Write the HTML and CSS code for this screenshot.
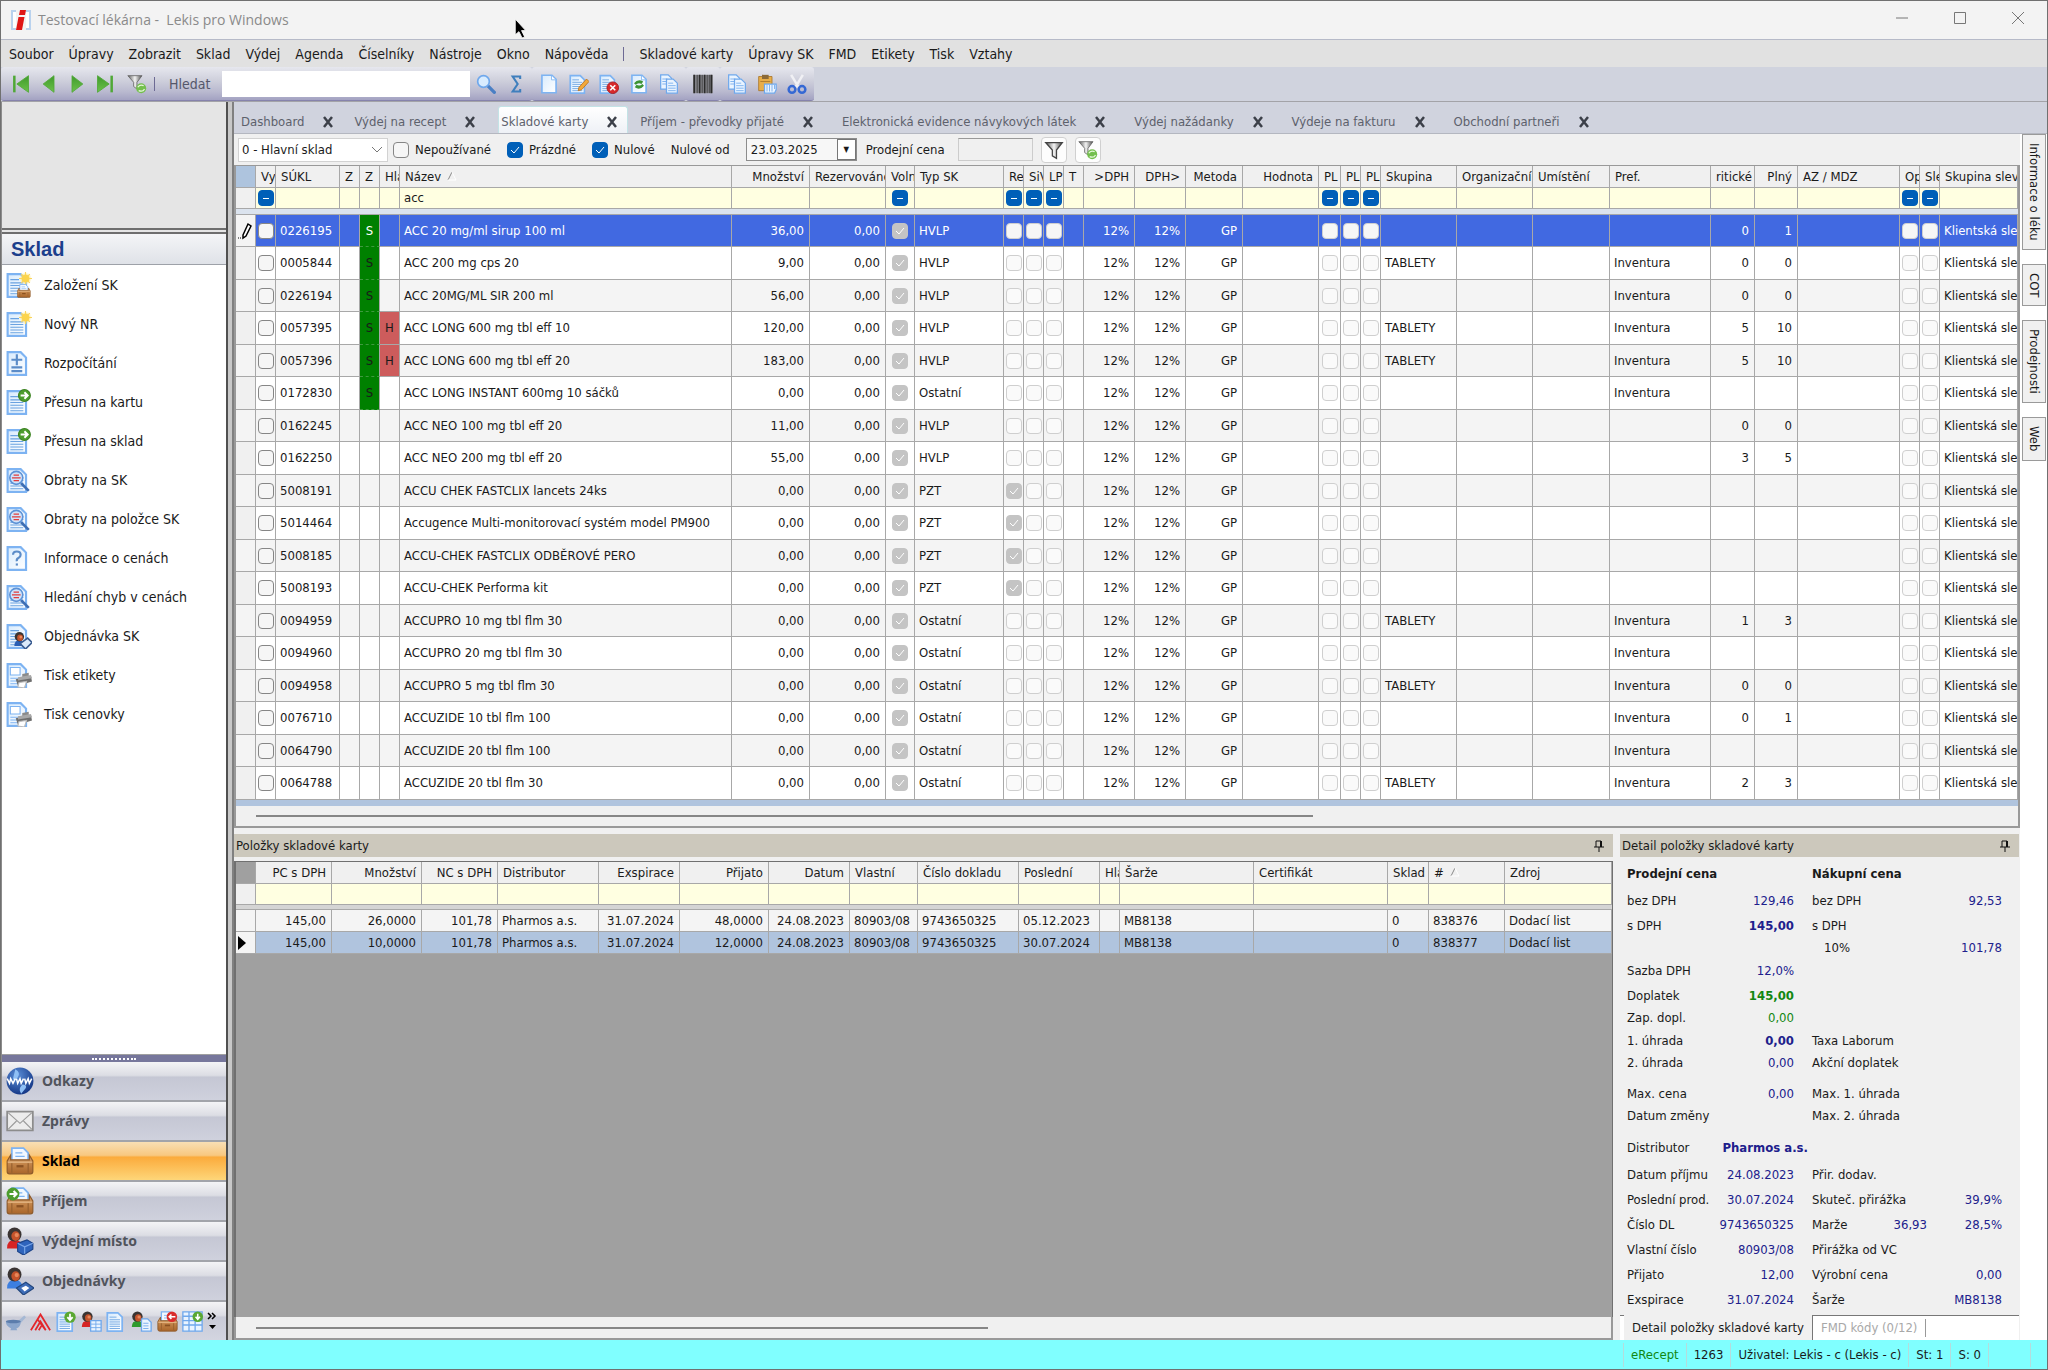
FILE: index.html
```html
<!DOCTYPE html>
<html lang="cs">
<head>
  <meta charset="UTF-8">
  <meta name="viewport" content="width=device-width, initial-scale=1.0">
  <title>Testovací lékárna - Lekis pro Windows</title>
  <link rel="stylesheet" href="styles.css">
</head>
<body>
  <!-- Icon set -->
  <svg class="icon-defs" aria-hidden="true">
    <defs>
      <linearGradient id="gGreen" x1="0" y1="0" x2="0" y2="1"><stop offset="0" stop-color="#3f9a2c"/><stop offset="1" stop-color="#6cc24a"/></linearGradient>
      <linearGradient id="gPaper" x1="0" y1="0" x2="1" y2="1"><stop offset="0" stop-color="#d8ebfd"/><stop offset="1" stop-color="#ffffff"/></linearGradient>
      <linearGradient id="gFunnel" x1="0" y1="0" x2="1" y2="0"><stop offset="0" stop-color="#5a5a5a"/><stop offset=".5" stop-color="#f4f4f4"/><stop offset="1" stop-color="#4a4a4a"/></linearGradient>
      <linearGradient id="gBox" x1="0" y1="0" x2="0" y2="1"><stop offset="0" stop-color="#d9a066"/><stop offset="1" stop-color="#a9652a"/></linearGradient>
      <radialGradient id="gGlobe" cx=".4" cy=".3" r=".8"><stop offset="0" stop-color="#5b8fd8"/><stop offset="1" stop-color="#0c2c7c"/></radialGradient>
      <radialGradient id="gSun"><stop offset=".4" stop-color="#ffd84a"/><stop offset="1" stop-color="#fff3a8" stop-opacity="0"/></radialGradient>
    </defs>

    <symbol id="i-page" viewBox="0 0 24 24"><path d="M3.5 1.5h12l5 5v16h-17z" fill="url(#gPaper)" stroke="#7db3f2" stroke-width="2"/><path d="M15 2v5h5" fill="#fff" stroke="#7db3f2"/></symbol>
    <symbol id="i-doc" viewBox="0 0 24 24"><path d="M1.5 2h12l5 5v16h-17z" fill="url(#gPaper)" stroke="#7db3f2" stroke-width="2"/><path d="M4 7h8M4 10h12M4 12.500h12M4 15h12M4 17.500h12M4 20h12" stroke="#6aa2e0"/></symbol>
    <symbol id="i-sun" viewBox="0 0 24 24"><circle cx="18" cy="6" r="6" fill="url(#gSun)"/><path d="M18 0v12M12 6h12M14 2l8 8M22 2l-8 8" stroke="#fbd45c"/><circle cx="18" cy="6" r="3.500" fill="#fbd44e"/></symbol>
    <symbol id="i-go" viewBox="0 0 24 24"><circle cx="17" cy="6" r="5.500" fill="#4c9c2e" stroke="#3d8323"/><path d="M13.500 6h6M17 3l3 3-3 3" fill="none" stroke="#fff" stroke-width="1.800"/></symbol>
    <symbol id="i-box" viewBox="0 0 24 24"><path d="M5 1h10l4 4v8H5z" fill="#f2f8ff" stroke="#7db3f2" stroke-width="1.500"/><path d="M8 5h6M8 8h8" stroke="#7db3f2"/><path d="M4 7l-3 5v9q0 2 2 2h18q2 0 2-2v-9l-3-5v4H4z" fill="url(#gBox)" stroke="#8d5a2a"/><path d="M1.500 13h21" stroke="#e7bd8b"/><path d="M9 15.500h6v2H9z" fill="#8a5222"/><path d="M5 14v8M19 14v8" stroke="#96602e"/></symbol>
    <symbol id="i-lens" viewBox="0 0 24 24"><path d="M14 15l7 7" stroke="#3e6fb4" stroke-width="2.500"/><circle cx="9.500" cy="10" r="6" fill="#cfe4fb" stroke="#5d92d6" stroke-width="1.500"/><path d="M7 7.500h5M5.500 10h8M7 12.500h5" stroke="#e23b3b" stroke-width="1.200"/></symbol>
    <symbol id="i-printer" viewBox="0 0 24 24"><path d="M15 11l6-1v5h-6z" fill="#8b8b8b"/><path d="M9 16l14-3 1 5-13 4z" fill="#6e6e6e"/><path d="M11 14l12-2 1 3-13 2z" fill="#a8a8a8"/><path d="M12 19l7-1-2 6-6-1z" fill="#fff" stroke="#bbb"/></symbol>
    <symbol id="i-person" viewBox="0 0 24 24"><path d="M1 20q0-8 7-8t8 8z" fill="currentColor"/><circle cx="8" cy="7" r="6.500" fill="#3a3432"/><ellipse cx="9" cy="8.500" rx="4" ry="4.500" fill="#c4532b"/><ellipse cx="10" cy="7.500" rx="2" ry="2" fill="#e8885a"/></symbol>

    <symbol id="i-first" viewBox="0 0 24 24"><path d="M4 2v20" stroke="#4fa836" stroke-width="3"/><path d="M21 2v20L7 12z" fill="url(#gGreen)" stroke="#4fa836"/></symbol>
    <symbol id="i-prev" viewBox="0 0 24 24"><path d="M18 2v20L5 12z" fill="url(#gGreen)" stroke="#4fa836"/></symbol>
    <symbol id="i-next" viewBox="0 0 24 24"><path d="M6 2v20l13-10z" fill="url(#gGreen)" stroke="#4fa836"/></symbol>
    <symbol id="i-last" viewBox="0 0 24 24"><path d="M20 2v20" stroke="#4fa836" stroke-width="3"/><path d="M3 2v20l14-10z" fill="url(#gGreen)" stroke="#4fa836"/></symbol>
    <symbol id="i-funnel" viewBox="0 0 24 24"><path d="M2 3h20l-7 9v10l-5-3v-7z" fill="url(#gFunnel)" stroke="#444" stroke-width="1.500"/></symbol>
    <symbol id="i-refilter" viewBox="0 0 24 24"><path d="M1 2h17l-6 8v8l-4-3v-5z" fill="url(#gFunnel)" stroke="#666"/><circle cx="17" cy="17" r="6" fill="#74bf4e"/><path d="M13 16q2-4 7-2M21 18q-2 4-7 2" fill="none" stroke="#e4f7d8" stroke-width="1.500"/></symbol>
    <symbol id="i-search" viewBox="0 0 24 24"><path d="M14 14l8 8" stroke="#4a7fc4" stroke-width="4" stroke-linecap="round"/><circle cx="9" cy="9" r="7" fill="#d8ecff" stroke="#6fa8ec" stroke-width="2"/></symbol>
    <symbol id="i-sigma" viewBox="0 0 24 24"><path d="M17 6V3H8l6 9-6 9h9v-3" fill="none" stroke="#3f7fbd" stroke-width="2.500"/></symbol>
    <symbol id="i-edit" viewBox="0 0 24 24"><use href="#i-doc"/><path d="M11 20l1-4 9-10 3 3-9 10z" fill="#f2a93b" stroke="#b9701c"/></symbol>
    <symbol id="i-delete" viewBox="0 0 24 24"><use href="#i-doc"/><circle cx="16.500" cy="16.500" r="7" fill="#d7292b" stroke="#a81618"/><path d="M13.500 13.500l6 6M19.500 13.500l-6 6" stroke="#fff" stroke-width="2"/></symbol>
    <symbol id="i-refresh" viewBox="0 0 24 24"><use href="#i-page"/><path d="M6 11q5-6 11-2l-2 3q-4-2-7 1zM18 14q-5 6-11 2l2-3q4 2 7-1z" fill="#3c9434"/></symbol>
    <symbol id="i-copy" viewBox="0 0 24 24"><path d="M2 1h9l4 4v13H2z" fill="#eaf4ff" stroke="#6fa8ec" stroke-width="1.500"/><path d="M4 6h6M4 9h6M4 12h6" stroke="#6fa8ec"/><path d="M9 6h8l5 5v12H9z" fill="#eaf4ff" stroke="#6fa8ec" stroke-width="1.500"/><path d="M11 11h6M11 14h9M11 17h9M11 20h9" stroke="#6fa8ec"/></symbol>
    <symbol id="i-barcode" viewBox="0 0 24 24"><path d="M0 1h24v22H0z" fill="#8a8a90"/><path d="M1.500 1v22M8 1v22M14 1v22M22 1v22" stroke="#2c2c2c" stroke-width="2"/><path d="M5 1v22M11 1v22M17 1v22M19.500 1v22" stroke="#333"/></symbol>
    <symbol id="i-paste" viewBox="0 0 24 24"><path d="M2 3h16v17H2z" fill="#e9ae48" stroke="#a8762a"/><path d="M6 1h8v5H6z" fill="#8c6a38"/><path d="M4 9h12" stroke="#a8762a"/><path d="M9 12h14v7l-2 4H9z" fill="#eaf4ff" stroke="#6fa8ec" stroke-width="1.500"/><path d="M12 13v8M15 13v8M18 13v8M21 13v5" stroke="#6fa8ec"/></symbol>
    <symbol id="i-cut" viewBox="0 0 24 24"><path d="M5 1l9 15M19 1l-9 15" stroke="#f0f0f4" stroke-width="3"/><circle cx="6" cy="18.500" r="4" fill="none" stroke="#3568d4" stroke-width="3"/><circle cx="18" cy="18.500" r="4" fill="none" stroke="#3568d4" stroke-width="3"/></symbol>

    <symbol id="i-newcard" viewBox="0 0 24 24"><use href="#i-doc"/><use href="#i-sun"/><use href="#i-box" x="10" y="11" width="13" height="13"/></symbol>
    <symbol id="i-newnr" viewBox="0 0 24 24"><use href="#i-doc"/><use href="#i-sun"/></symbol>
    <symbol id="i-split" viewBox="0 0 24 24"><path d="M1.500 2h12l5 5v16h-17z" fill="url(#gPaper)" stroke="#7db3f2" stroke-width="2"/><path d="M10 4v10M5 9h10M5 16h10M5 19.500h10" stroke="#5b8cc8" stroke-width="2"/></symbol>
    <symbol id="i-move" viewBox="0 0 24 24"><use href="#i-doc"/><use href="#i-go"/></symbol>
    <symbol id="i-turnover" viewBox="0 0 24 24"><use href="#i-doc"/><use href="#i-lens"/></symbol>
    <symbol id="i-info" viewBox="0 0 24 24"><path d="M1.500 2h12l5 5v16h-17z" fill="url(#gPaper)" stroke="#7db3f2" stroke-width="2"/><path d="M6.500 9q0-3 3.500-3t3.500 3q0 2-2 3t-1.500 3" fill="none" stroke="#5b8cc8" stroke-width="2"/><path d="M9 17h2v2H9z" fill="#5b8cc8"/></symbol>
    <symbol id="i-order" viewBox="0 0 24 24"><use href="#i-doc"/><use href="#i-person" x="7" y="8" width="16" height="16" color="#2b5fb4"/><path d="M13 19l7-5 4 4-6 6z" fill="#dcebfb" stroke="#3a5c90" stroke-width="1.500"/></symbol>
    <symbol id="i-label" viewBox="0 0 24 24"><path d="M1.500 2h12l5 5v16h-17z" fill="url(#gPaper)" stroke="#7db3f2" stroke-width="2"/><path d="M4 5h9v7H4z" fill="#fff" stroke="#7db3f2"/><path d="M4 15h8M4 17.500h8M4 20h8" stroke="#7db3f2"/><use href="#i-printer"/></symbol>

    <symbol id="i-globe" viewBox="0 0 24 24"><circle cx="12" cy="12" r="11.500" fill="url(#gGlobe)"/><path d="M8 2q5 3 2 7t-4 1zM14 15q4 0 3 3l-4 5q-3-4 1-8z" fill="#8fc0f5"/><path d="M1 10l2 4 1-4 2 4 2-4M9 10l1 4 2-4 1 4 2-4M16 10l1 4 2-4 1 4 2-4" fill="none" stroke="#fff" stroke-width="1.300"/></symbol>
    <symbol id="i-mail" viewBox="0 0 24 24"><path d="M1 4h22v16H1z" fill="#ececec" stroke="#8c8c8c" stroke-width="1.500"/><path d="M2 5l10 9L22 5M2 19l7-7M22 19l-7-7" fill="none" stroke="#9a9a9a"/></symbol>
    <symbol id="i-receive" viewBox="0 0 24 24"><use href="#i-box"/><circle cx="6" cy="6" r="5.500" fill="#4c9c2e"/><path d="M3 6h6M6.500 3.500L9 6 6.500 8.500" fill="none" stroke="#fff" stroke-width="1.800"/></symbol>
    <symbol id="i-dispense" viewBox="0 0 24 24"><use href="#i-person" x="0" y="0" width="22" height="22" color="#d62424"/><path d="M10 14l8-3 5 3v5l-8 5-5-3z" fill="#2f64bc" stroke="#1d4488"/><path d="M10 14l6 3 7-3M16 17v6" fill="none" stroke="#7aa6e8"/></symbol>
    <symbol id="i-orders" viewBox="0 0 24 24"><use href="#i-person" x="0" y="0" width="22" height="22" color="#3d7fe0"/><path d="M9 18l8-5 7 5-9 6z" fill="#3d6cb8" stroke="#23477e"/><path d="M13 18l4-2 3 2-4 3z" fill="#fff"/></symbol>

    <symbol id="i-mortar" viewBox="0 0 24 24"><path d="M12 14L22 5l2 2-8 9z" fill="#a4b8d4"/><path d="M1 12h17q0 6-5 8l1 2H6l1-2q-6-3-6-8z" fill="#8ba6cc"/><ellipse cx="9.500" cy="12" rx="8.500" ry="2" fill="#5c7dac"/></symbol>
    <symbol id="i-alfa" viewBox="0 0 24 24"><path d="M1 22L12 4l11 18M6 22l6-10 6 10M10 22l3-5M9 10l9 12" fill="none" stroke="#e3262b" stroke-width="2"/></symbol>
    <symbol id="i-docdown" viewBox="0 0 24 24"><use href="#i-doc"/><circle cx="16" cy="7" r="6.500" fill="#5aa832"/><path d="M16 3v7M13 7l3 3.500L19 7" fill="none" stroke="#fff" stroke-width="2"/></symbol>
    <symbol id="i-pergrid" viewBox="0 0 24 24"><use href="#i-person" x="0" y="0" width="22" height="22" color="#d62424"/><path d="M11 11h12v12H11z" fill="#eaf4ff" stroke="#6fa8ec" stroke-width="1.500"/><path d="M11 15h12M11 19h12M17 11v12" stroke="#6fa8ec"/></symbol>
    <symbol id="i-perdoc" viewBox="0 0 24 24"><use href="#i-person" x="0" y="0" width="22" height="22" color="#2d9a2d"/><path d="M12 9h7l4 4v10H12z" fill="#eaf4ff" stroke="#6fa8ec" stroke-width="1.500"/><path d="M14 14h6M14 17h6M14 20h6" stroke="#6fa8ec"/></symbol>
    <symbol id="i-boxout" viewBox="0 0 24 24"><use href="#i-box"/><circle cx="17" cy="6.500" r="6" fill="#d92c2c"/><path d="M21 6.500h-7M16.500 4L14 6.500 16.500 9" fill="none" stroke="#fff" stroke-width="1.800"/></symbol>
    <symbol id="i-griddown" viewBox="0 0 24 24"><path d="M1 1h22v22H1z" fill="#eaf4ff" stroke="#6fa8ec" stroke-width="1.500"/><path d="M1 6h22M1 11h22M1 16h22M8 1v22M15 1v22" stroke="#6fa8ec" stroke-width="1.500"/><circle cx="18" cy="6.500" r="6" fill="#5aa832"/><path d="M18 3v6M15.500 6.500L18 9.500l2.500-3" fill="none" stroke="#fff" stroke-width="1.800"/></symbol>
    <symbol id="i-pin" viewBox="0 0 12 12"><path d="M3 7V1h5v6M1 7h10M6 7v5" fill="none" stroke="#111"/><path d="M7 1h2v6H7z" fill="#111"/></symbol>
    <symbol id="i-sort" viewBox="0 0 10 10"><path d="M1 9L5 1" stroke="#888"/><path d="M5 1l4 8H1" fill="none" stroke="#fff"/></symbol>
    <symbol id="i-close" viewBox="0 0 12 12"><path d="M2 1l8 10M10 1L2 11" stroke="#3c4049" stroke-width="2.500"/></symbol>
  </svg>

  <div class="window">
    <header class="titlebar">
      <svg class="app-logo" viewBox="0 0 20 20"><path d="M5 1H1v18h4M15 1h4v18h-4" fill="#fff" stroke="#b9d2ee" stroke-width="2"/><path d="M9 0h6l-1 5H8zM7.500 7h6L11 20H5z" fill="#e01717"/></svg>
      <span class="titlebar-text">Testovací lékárna -&nbsp; Lekis pro Windows</span>
      <div class="window-buttons">
        <button type="button" aria-label="Minimalizovat"><svg viewBox="0 0 12 12"><path d="M0 6h12" stroke="#777"/></svg></button>
        <button type="button" aria-label="Maximalizovat"><svg viewBox="0 0 12 12"><path d="M.5.5h11v11H.5z" fill="none" stroke="#777"/></svg></button>
        <button type="button" aria-label="Zavřít"><svg viewBox="0 0 12 12"><path d="M0 0l12 12M12 0L0 12" stroke="#777"/></svg></button>
      </div>
      <svg class="cursor" viewBox="0 0 12 20"><path d="M1 1v15l3.500-3 3 6 2.500-1-3-6H11z" fill="#000" stroke="#fff" stroke-width=".8"/></svg>
    </header>

    <nav class="menubar">
      <a href="#">Soubor</a>
      <a href="#">Úpravy</a>
      <a href="#">Zobrazit</a>
      <a href="#">Sklad</a>
      <a href="#">Výdej</a>
      <a href="#">Agenda</a>
      <a href="#">Číselníky</a>
      <a href="#">Nástroje</a>
      <a href="#">Okno</a>
      <a href="#">Nápověda</a>
      <span class="separator"></span>
      <a href="#">Skladové karty</a>
      <a href="#">Úpravy SK</a>
      <a href="#">FMD</a>
      <a href="#">Etikety</a>
      <a href="#">Tisk</a>
      <a href="#">Vztahy</a>
    </nav>

    <div class="toolbar">
      <div class="strip strip-nav">
        <button type="button" aria-label="První"><svg><use href="#i-first"/></svg></button>
        <button type="button" aria-label="Předchozí"><svg><use href="#i-prev"/></svg></button>
        <button type="button" aria-label="Další"><svg><use href="#i-next"/></svg></button>
        <button type="button" aria-label="Poslední"><svg><use href="#i-last"/></svg></button>
        <button type="button" class="wide" aria-label="Obnovit filtr"><svg><use href="#i-refilter"/></svg></button>
        <span class="separator"></span>
        <label for="search">Hledat</label>
        <input type="text" id="search">
        <button type="button" class="wide" aria-label="Najít"><svg><use href="#i-search"/></svg></button>
        <button type="button" aria-label="Součet"><svg><use href="#i-sigma"/></svg></button>
      </div>
      <div class="strip">
        <button type="button" aria-label="Nový"><svg><use href="#i-page"/></svg></button>
        <button type="button" aria-label="Upravit"><svg><use href="#i-edit"/></svg></button>
        <button type="button" aria-label="Smazat"><svg><use href="#i-delete"/></svg></button>
        <button type="button" aria-label="Obnovit"><svg><use href="#i-refresh"/></svg></button>
        <button type="button" aria-label="Kopie karty"><svg><use href="#i-copy"/></svg></button>
      </div>
      <div class="strip">
        <button type="button" aria-label="Čárový kód"><svg><use href="#i-barcode"/></svg></button>
      </div>
      <div class="strip">
        <button type="button" aria-label="Kopírovat"><svg><use href="#i-copy"/></svg></button>
        <button type="button" aria-label="Vložit"><svg><use href="#i-paste"/></svg></button>
        <button type="button" aria-label="Vyjmout"><svg><use href="#i-cut"/></svg></button>
      </div>
    </div>

    <div class="workspace">
      <aside class="sidebar">
        <div class="sidebar-top"></div>
        <h2 class="sidebar-title">Sklad</h2>
        <ul class="task-list">
          <li><a href="#"><svg><use href="#i-newcard"/></svg>Založení SK</a></li>
          <li><a href="#"><svg><use href="#i-newnr"/></svg>Nový NR</a></li>
          <li><a href="#"><svg><use href="#i-split"/></svg>Rozpočítání</a></li>
          <li><a href="#"><svg><use href="#i-move"/></svg>Přesun na kartu</a></li>
          <li><a href="#"><svg><use href="#i-move"/></svg>Přesun na sklad</a></li>
          <li><a href="#"><svg><use href="#i-turnover"/></svg>Obraty na SK</a></li>
          <li><a href="#"><svg><use href="#i-turnover"/></svg>Obraty na položce SK</a></li>
          <li><a href="#"><svg><use href="#i-info"/></svg>Informace o cenách</a></li>
          <li><a href="#"><svg><use href="#i-turnover"/></svg>Hledání chyb v cenách</a></li>
          <li><a href="#"><svg><use href="#i-order"/></svg>Objednávka SK</a></li>
          <li><a href="#"><svg><use href="#i-label"/></svg>Tisk etikety</a></li>
          <li><a href="#"><svg><use href="#i-label"/></svg>Tisk cenovky</a></li>
        </ul>
        <div class="grip"><span></span></div>
        <div class="nav-groups">
          <button type="button"><svg><use href="#i-globe"/></svg>Odkazy</button>
          <button type="button"><svg><use href="#i-mail"/></svg>Zprávy</button>
          <button type="button" class="active"><svg><use href="#i-box"/></svg>Sklad</button>
          <button type="button"><svg><use href="#i-receive"/></svg>Příjem</button>
          <button type="button"><svg><use href="#i-dispense"/></svg>Výdejní místo</button>
          <button type="button"><svg><use href="#i-orders"/></svg>Objednávky</button>
        </div>
        <div class="nav-overflow">
          <svg><use href="#i-mortar"/></svg>
          <svg><use href="#i-alfa"/></svg>
          <svg><use href="#i-docdown"/></svg>
          <svg><use href="#i-pergrid"/></svg>
          <svg><use href="#i-doc"/></svg>
          <svg><use href="#i-perdoc"/></svg>
          <svg><use href="#i-boxout"/></svg>
          <svg><use href="#i-griddown"/></svg>
          <button type="button" aria-label="Další skupiny"><svg viewBox="0 0 10 18"><path d="M1 1l3 3-3 3M5 1l3 3-3 3" fill="none" stroke="#000" stroke-width="1.500"/><path d="M2 13h7l-3.500 4z"/></svg></button>
        </div>
      </aside>
      <div class="splitter"></div>

      <main class="main">
        <div class="tabs">
          <div class="tab">Dashboard <button type="button" aria-label="Zavřít Dashboard"><svg><use href="#i-close"/></svg></button></div>
          <div class="tab">Výdej na recept <button type="button" aria-label="Zavřít Výdej na recept"><svg><use href="#i-close"/></svg></button></div>
          <div class="tab active">Skladové karty <button type="button" aria-label="Zavřít Skladové karty"><svg><use href="#i-close"/></svg></button></div>
          <div class="tab">Příjem - převodky přijaté <button type="button" aria-label="Zavřít Příjem"><svg><use href="#i-close"/></svg></button></div>
          <div class="tab">Elektronická evidence návykových látek <button type="button" aria-label="Zavřít evidenci"><svg><use href="#i-close"/></svg></button></div>
          <div class="tab">Výdej nažádanky <button type="button" aria-label="Zavřít Výdej na žádanky"><svg><use href="#i-close"/></svg></button></div>
          <div class="tab">Výdeje na fakturu <button type="button" aria-label="Zavřít Výdeje na fakturu"><svg><use href="#i-close"/></svg></button></div>
          <div class="tab">Obchodní partneři <button type="button" aria-label="Zavřít Obchodní partneři"><svg><use href="#i-close"/></svg></button></div>
        </div>

        <div class="main-body">
          <div class="content">
            <form class="filterbar">
              <select aria-label="Sklad"><option>0 - Hlavní sklad</option></select>
              <label><input type="checkbox" class="check"> Nepoužívané</label>
              <label><input type="checkbox" class="check" checked> Prázdné</label>
              <label><input type="checkbox" class="check" checked> Nulové</label>
              <label for="zero-from">Nulové od</label>
              <div class="datebox"><input type="text" id="zero-from" value="23.03.2025"><button type="button" aria-label="Kalendář">▼</button></div>
              <label for="price">Prodejní cena</label>
              <input type="text" id="price" class="price">
              <button type="button" class="tool" aria-label="Filtrovat"><svg><use href="#i-funnel"/></svg></button>
              <button type="button" class="tool" aria-label="Zrušit filtr"><svg><use href="#i-refilter"/></svg></button>
            </form>

            <section class="grid-panel">
              <table class="grid cards" id="cards"></table>
              <div class="grid-end"></div>
              <div class="scrollbar"><span class="thumb thumb-cards"></span></div>
            </section>

            <div class="bottom">
              <section class="items">
                <h3 class="panel-title">Položky skladové karty <svg><use href="#i-pin"/></svg></h3>
                <div class="items-body">
                  <table class="grid lots" id="lots"></table>
                </div>
                <div class="scrollbar"><span class="thumb thumb-lots"></span></div>
              </section>

              <section class="detail">
                <h3 class="panel-title">Detail položky skladové karty <svg><use href="#i-pin"/></svg></h3>
                <div class="detail-body">
                  <div class="row head"><span>Prodejní cena</span><span>Nákupní cena</span></div>
                  <div class="row"><span>bez DPH <b>129,46</b></span><span>bez DPH <b>92,53</b></span></div>
                  <div class="row"><span>s DPH <b class="strong">145,00</b></span><span>s DPH</span></div>
                  <div class="row low"><span></span><span class="indent">10% <b>101,78</b></span></div>
                  <div class="row"><span>Sazba DPH <b>12,0%</b></span><span></span></div>
                  <div class="row"><span>Doplatek <b class="strong green">145,00</b></span><span></span></div>
                  <div class="row low"><span>Zap. dopl. <b class="green">0,00</b></span><span></span></div>
                  <div class="row"><span>1. úhrada <b class="strong">0,00</b></span><span>Taxa Laborum</span></div>
                  <div class="row low"><span>2. úhrada <b>0,00</b></span><span>Akční doplatek</span></div>
                  <div class="row spaced"><span>Max. cena <b>0,00</b></span><span>Max. 1. úhrada</span></div>
                  <div class="row low"><span>Datum změny</span><span>Max. 2. úhrada</span></div>
                  <div class="row spaced tall"><span class="supplier">Distributor <b class="strong">Pharmos a.s.</b></span><span></span></div>
                  <div class="row"><span>Datum příjmu <b>24.08.2023</b></span><span>Přir. dodav.</span></div>
                  <div class="row"><span>Poslední prod. <b>30.07.2024</b></span><span>Skuteč. přirážka <b>39,9%</b></span></div>
                  <div class="row"><span>Číslo DL <b>9743650325</b></span><span>Marže <b>36,93</b> <b class="second">28,5%</b></span></div>
                  <div class="row"><span>Vlastní číslo <b>80903/08</b></span><span>Přirážka od VC</span></div>
                  <div class="row"><span>Přijato <b>12,00</b></span><span>Výrobní cena <b>0,00</b></span></div>
                  <div class="row"><span>Exspirace <b>31.07.2024</b></span><span>Šarže <b>MB8138</b></span></div>
                </div>
                <div class="detail-tabs">
                  <button type="button" class="active">Detail položky skladové karty</button>
                  <button type="button">FMD kódy (0/12)</button>
                  <span class="tab-end"></span>
                </div>
              </section>
            </div>
          </div>

          <nav class="dock">
            <button type="button">Informace o léku</button>
            <button type="button">COT</button>
            <button type="button">Prodejnosti</button>
            <button type="button">Web</button>
          </nav>
        </div>
      </main>
    </div>

    <footer class="statusbar">
      <span class="online">eRecept</span>
      <span>1263</span>
      <span>Uživatel: Lekis - c (Lekis - c)</span>
      <span>St: 1</span>
      <span>S: 0</span>
      <span class="empty"></span>
      <span class="empty"></span>
    </footer>
  </div>

  <script src="script.js"></script>
</body>
</html>
```

FILE: styles.css
```css
* {
  box-sizing: border-box;
}

body {
  margin: 0;
  font-family: "DejaVu Sans Condensed", "DejaVu Sans", Tahoma, sans-serif;
  font-size: 13px;
  line-height: 16px;
  color: #1a1a1a;
}

a {
  color: inherit;
  text-decoration: none;
}

button,
input,
select {
  font: inherit;
  color: inherit;
}

button {
  padding: 0;
  border: none;
  background: none;
}

.icon-defs {
  position: absolute;
  width: 0;
  height: 0;
}

.window {
  display: flex;
  flex-direction: column;
  min-height: 100vh;
  border: 1px solid #707070;
  background-color: #f0f0f0;
}

/* Title bar */
.titlebar {
  position: relative;
  display: flex;
  align-items: center;
  height: 39px;
  padding-left: 10px;
  background-color: #f3f3f3;
  border-bottom: 1px solid #b6bac8;
}

.app-logo {
  width: 20px;
  height: 20px;
  margin-right: 7px;
}

.titlebar-text {
  font-family: "Open Sans", sans-serif;
  font-size: 14px;
  color: #8a8a8a;
}

.window-buttons {
  display: flex;
  margin-left: auto;
}

.window-buttons button {
  width: 58px;
  height: 38px;
}

.window-buttons svg {
  width: 12px;
  height: 12px;
}

.cursor {
  position: absolute;
  left: 513px;
  top: 17px;
  width: 13px;
  height: 21px;
}

/* Menu and toolbar */
.menubar {
  display: flex;
  align-items: center;
  gap: 15px;
  height: 27px;
  padding-left: 8px;
  font-size: 14px;
  background-color: #e1e1e1;
}

.separator {
  width: 1px;
  height: 14px;
  background-color: #6d6a94;
}

.toolbar {
  display: flex;
  height: 35px;
  background-color: #d0d3de;
  border-bottom: 1px solid #a3a3a8;
}

.strip {
  display: flex;
  align-items: center;
  height: 34px;
  padding: 0 2px;
  border-radius: 3px;
  border-bottom: 1px solid #8683ac;
  background: linear-gradient(#e6e7ee, #cfd0dc 40%, #b9b9cf 75%, #a3a2c2);
}

.strip button {
  width: 30px;
  height: 30px;
}

.strip svg {
  display: block;
  width: 20px;
  height: 20px;
  margin: 0 auto;
}

.strip-nav {
  padding-left: 6px;
}

.strip-nav button {
  width: 28px;
}

.strip-nav .wide {
  width: 35px;
}

.strip-nav label {
  margin: 0 12px 0 14px;
  font-size: 14px;
  color: #55576a;
}

.strip-nav input {
  width: 248px;
  height: 26px;
  padding: 0 4px;
  border: none;
  background-color: #fff;
}

.strip-nav input + .wide {
  width: 32px;
}

/* Workspace */
.workspace {
  display: flex;
  flex: 1;
}

.sidebar {
  display: flex;
  flex-direction: column;
  width: 225px;
  border-left: 1px solid #8c8c8c;
  background-color: #fff;
}

.splitter {
  width: 8px;
  background-color: #c8c8c8;
  border-left: 2px solid #505050;
  border-right: 2px solid #808080;
}

.sidebar-top {
  height: 132px;
  background-color: #e5e5e5;
  border-bottom: 6px double #6e6e6e;
}

.sidebar-title {
  height: 31px;
  margin: 0;
  padding-left: 9px;
  font-family: "Liberation Sans", Arial, sans-serif;
  font-size: 20px;
  line-height: 31px;
  color: #1c3f8c;
  background: linear-gradient(#f4f5f7, #dfe2e8);
  border-bottom: 1px solid #9da1a8;
}

.task-list {
  flex: 1;
  margin: 0;
  padding: 0;
  font-size: 14px;
  list-style: none;
}

.task-list a {
  display: flex;
  align-items: center;
  gap: 12px;
  height: 39px;
  padding-left: 4px;
}

.task-list svg {
  width: 26px;
  height: 26px;
}

.grip {
  display: flex;
  justify-content: center;
  align-items: center;
  height: 8px;
  background-color: #77779c;
  border-top: 1px solid #a0a0a0;
}

.grip span {
  width: 44px;
  border-top: 2px dotted #fff;
}

.nav-groups button {
  display: flex;
  align-items: center;
  gap: 8px;
  width: 100%;
  height: 40px;
  padding-left: 4px;
  font-family: "Noto Sans", sans-serif;
  font-size: 14px;
  font-weight: bold;
  color: #51545c;
  background: linear-gradient(#f4f4f6, #dcdde4 35%, #c5c7d4 40%, #cfd1dd);
  border-bottom: 2px solid #a2a4aa;
}

.nav-groups .active {
  color: #000;
  background: linear-gradient(#f9dfb4, #f8c880 35%, #fbab3c 40%, #fed679);
}

.nav-groups svg {
  width: 28px;
  height: 28px;
}

.nav-overflow {
  display: flex;
  align-items: center;
  justify-content: space-between;
  height: 38px;
  padding: 0 9px 0 3px;
  background: linear-gradient(#f4f4f6, #dcdde4 35%, #c9cbd7 40%, #d3d5e0);
}

.nav-overflow svg {
  width: 21px;
  height: 21px;
}

.nav-overflow button svg {
  display: block;
  width: 10px;
  height: 18px;
}

.main {
  display: flex;
  flex: 1;
  flex-direction: column;
  min-width: 0;
}

/* Document tabs */
.tabs {
  display: flex;
  align-items: flex-end;
  height: 32px;
  background-color: #d0d3de;
  border-bottom: 1px solid #b4b7c0;
}

.tab {
  display: flex;
  align-items: center;
  gap: 18px;
  height: 27px;
  padding: 4px 13px 0 15px;
  color: #5d616c;
}

.tab:first-child {
  padding-right: 5px;
  padding-left: 7px;
}

.tab svg {
  display: block;
  width: 12px;
  height: 12px;
}

.tab.active {
  margin-left: 9px;
  padding: 3px 9px 0 2px;
  background: linear-gradient(#ffffff, #eef1f6);
  border: 1px solid #c3e3e6;
  border-bottom: none;
  border-radius: 3px 3px 0 0;
}

.tab.active + .tab {
  padding-left: 12px;
}

.main-body {
  display: flex;
  flex: 1;
}

.content {
  display: flex;
  flex: 1;
  flex-direction: column;
  min-width: 0;
}

/* Filter bar */
.filterbar {
  display: flex;
  align-items: center;
  height: 31px;
  padding-left: 4px;
}

.filterbar label {
  display: flex;
  align-items: center;
  gap: 6px;
  margin-right: 16px;
}

.filterbar select {
  width: 150px;
  height: 24px;
  margin-right: 5px;
  padding: 0 3px;
  appearance: none;
  background: #fff url("data:image/svg+xml,%3Csvg xmlns='http://www.w3.org/2000/svg' width='10' height='6'%3E%3Cpath d='M0 0l5 5 5-5' fill='none' stroke='%23777'/%3E%3C/svg%3E") right 5px center no-repeat;
  border: 1px solid #d2d2d2;
}

.check {
  flex: none;
  width: 16px;
  height: 16px;
  margin: 0;
  appearance: none;
  vertical-align: middle;
  background: #f6f6f6 center no-repeat;
  border: 1px solid #868686;
  border-radius: 4px;
}

.check:checked {
  background-color: #005fb8;
  background-image: url("data:image/svg+xml,%3Csvg xmlns='http://www.w3.org/2000/svg' width='10' height='10'%3E%3Cpath d='M1 5l3 3 5-6' fill='none' stroke='%23fff'/%3E%3C/svg%3E");
  border-color: #005fb8;
}

.check:disabled {
  background-color: #fafafa;
  border-color: #cfcfcf;
}

.check:disabled:checked {
  background-color: #c4c4c4;
  border-color: #c4c4c4;
}

.check.mixed {
  background-color: #005fb8;
  background-image: linear-gradient(#fff, #fff);
  background-size: 6px 1px;
  border-color: #005fb8;
}

.datebox {
  display: flex;
  width: 111px;
  height: 23px;
  margin-right: 9px;
  border: 1px solid #8c8c8c;
  background-color: #f7f7f7;
}

.datebox input {
  flex: 1;
  min-width: 0;
  padding: 0 4px;
  border: none;
  background: none;
}

.datebox button {
  width: 19px;
  font-size: 8px;
  background-color: #fff;
  border: 1px solid #777;
}

.filterbar label[for="price"] {
  margin-right: 13px;
}

.price {
  width: 75px;
  height: 23px;
  margin-right: 8px;
  background-color: #f0f0f0;
  border: 1px solid #ccc;
  border-top-color: #999;
}

.tool {
  width: 26px;
  height: 26px;
  margin-right: 8px;
  background-color: #fdfdfd;
  border: 1px solid #d0d0d0;
  border-radius: 4px;
}

.tool svg {
  display: block;
  width: 20px;
  height: 20px;
  margin: 0 auto;
}

/* Data grids */
.grid-panel {
  border: 2px solid #999;
  border-width: 1px 2px 2px;
}

.grid {
  width: 100%;
  table-layout: fixed;
  border-collapse: separate;
  border-spacing: 0;
}

.grid th,
.grid td {
  padding: 0 4px;
  overflow: hidden;
  text-align: left;
  white-space: nowrap;
  border-right: 1px solid #a8a8a8;
  border-bottom: 1px solid #a8a8a8;
}

.grid thead th {
  height: 22px;
  padding: 0 5px;
  font-weight: normal;
  background-color: #f0f0f0;
}

.grid .filter td {
  height: 21px;
  background-color: #ffffe1;
}

.grid .gap td {
  height: 5px;
  border-right: none;
  background-color: #dbe3ee;
}

.cards .gap td {
  height: 6px;
}

.grid .num {
  padding-right: 5px;
  text-align: right;
}

.grid td.box {
  padding: 0;
  text-align: center;
}

.grid th.box {
  padding-right: 0;
}

.grid .mark,
.grid .filter .mark {
  padding: 0 2px;
  background-color: #f0f0f0;
}

.grid svg {
  width: 10px;
  height: 10px;
  margin-left: 2px;
}

.cards thead .mark {
  background-color: #aec4de;
}

.cards tbody .data td {
  height: 33px;
  background-color: #fff;
}

.cards tbody .data:nth-child(odd) td {
  height: 32px;
}

.cards tbody .data:nth-child(odd) td:not(.in-stock):not(.hlp) {
  background-color: #f4f4f4;
}

.cards tbody .data.selected td:not(.mark):not(.in-stock) {
  color: #fff;
  background-color: #4169e1;
}

.cards .selected .check {
  background-color: #f6f6f6;
}

.cards .selected .check:disabled:checked {
  background-color: #c4c4c4;
}

.cards tbody .data .mark {
  background-color: #f0f0f0;
}

.cards tbody .data .in-stock {
  background-color: #008000;
  border-bottom: 1px dashed #3f9a3f;
}

.cards .selected .in-stock {
  color: #fff;
}

.cards tbody .data .hlp {
  background-color: #cd5c5c;
}

.grid .in-stock,
.grid .hlp {
  padding: 0;
  text-align: center;
}

.cards .mark svg {
  width: 14px;
  height: 18px;
  margin: 0;
  vertical-align: middle;
}

.grid-end {
  height: 6px;
  background-color: #b0c4de;
}

.scrollbar {
  display: flex;
  align-items: center;
  height: 20px;
  padding-left: 20px;
  background-color: #f0f0f0;
}

.thumb {
  height: 2px;
  background-color: #868686;
}

.thumb-cards {
  width: 60%;
}

.thumb-lots {
  width: 54%;
}

/* Bottom panels */
.bottom {
  display: flex;
  flex: 1;
  gap: 7px;
  margin: 6px 1px 0 0;
}

.items {
  display: flex;
  flex: 1;
  flex-direction: column;
  min-width: 0;
}

.panel-title {
  display: flex;
  align-items: center;
  justify-content: space-between;
  height: 23px;
  margin: 0;
  padding: 0 8px 0 2px;
  font-size: 13px;
  font-weight: normal;
  background-color: #ccc8bc;
}

.panel-title svg {
  width: 12px;
  height: 12px;
}

.items-body {
  flex: 1;
  margin-top: 4px;
  background-color: #a0a0a0;
  border: 1px solid #707070;
  border-width: 1px 1px 0 2px;
}

.lots thead .mark {
  background-color: #a0a0a0;
}

.lots .gap td {
  background-color: #d4d4d4;
}

.lots .data td {
  height: 22px;
  background-color: #f4f4f4;
}

.lots .data.selected td:not(.mark) {
  background-color: #b0c4de;
}

.lots .mark svg {
  display: block;
  width: 8px;
  height: 14px;
  margin: 0;
}

.items .scrollbar {
  height: 23px;
  border: 2px solid #999;
  border-top: none;
}

.detail {
  display: flex;
  flex-direction: column;
  width: 399px;
}

.detail-body {
  flex: 1;
  padding: 3px 17px 0 7px;
}

.row {
  display: grid;
  grid-template-columns: 167fr 190fr;
  column-gap: 18px;
  align-items: center;
  height: 25px;
}

.row > span {
  display: flex;
}

.row b {
  margin-left: auto;
  font-weight: normal;
  color: #20208c;
}

.row .strong {
  font-weight: bold;
}

.row .green {
  color: #128712;
}

.row .second {
  width: 75px;
  margin-left: 0;
  text-align: right;
}

.row .supplier {
  margin-right: -14px;
}

.detail-body .head {
  height: 28px;
  font-weight: bold;
}

.low {
  height: 20px;
}

.spaced {
  margin-top: 8px;
}

.tall {
  height: 28px;
}

.indent {
  padding-left: 12px;
}

.detail-tabs {
  display: flex;
  align-items: center;
  height: 25px;
  background-color: #fff;
  border-top: 1px solid #777;
}

.detail-tabs button {
  height: 24px;
  padding: 0 8px;
  color: #a8a8a8;
}

.detail-tabs .active {
  height: 25px;
  margin: -1px 0 0 4px;
  color: #1a1a1a;
  background-color: #f0f0f0;
  border-right: 1px solid #777;
}

.tab-end {
  width: 1px;
  height: 18px;
  background-color: #999;
}

/* Right dock */
.dock {
  display: flex;
  flex-direction: column;
  gap: 14px;
  width: 27px;
  padding-left: 2px;
  background-color: #fff;
}

.dock button {
  width: 24px;
  padding: 8px 0;
  writing-mode: vertical-rl;
  background-color: #f0f0f0;
  border: 1px solid #9a9a9a;
}

/* Status bar */
.statusbar {
  display: flex;
  align-items: center;
  justify-content: flex-end;
  height: 29px;
  background-color: #80ffff;
}

.statusbar span {
  padding: 0 7px;
  line-height: 24px;
  border-left: 1px solid #b4dcdc;
}

.statusbar .online {
  color: #128712;
}

.statusbar .empty {
  width: 42px;
  height: 24px;
}

.statusbar .empty:last-child {
  width: 17px;
}
```

FILE: script.js
```js
// Column definitions: [title, width, kind]
const cardColumns = [
  ['', 20, 'mark'], ['Vy', 20, 'box'], ['SÚKL', 64, ''], ['Z', 20, ''], ['Z', 20, ''], ['Hlá', 20, ''],
  ['Název', 332, 'sort'], ['Množství', 78, 'num'], ['Rezervováno', 76, ''], ['Volně', 29, 'box'], ['Typ SK', 89, ''],
  ['Rec', 20, 'box'], ['SiV', 20, 'box'], ['LP', 20, 'box'], ['T', 20, ''], ['>DPH', 51, 'num'], ['DPH>', 51, 'num'],
  ['Metoda', 57, 'num'], ['Hodnota', 76, 'num'], ['PL', 22, 'box'], ['PL', 20, 'box'], ['PL', 20, 'box'],
  ['Skupina', 76, ''], ['Organizační', 76, ''], ['Umístění', 77, ''], ['Pref.', 101, ''], ['ritické', 44, 'num'],
  ['Plný', 43, 'num'], ['AZ / MDZ', 102, ''], ['Op', 20, 'box'], ['Sle', 20, 'box'], ['Skupina slev', 0, '']
];

// sukl, stock flag, H flag, name, quantity, type, group, pref, critical, full
const cards = [
  ['0226195', 'S', '', 'ACC 20 mg/ml sirup 100 ml', '36,00', 'HVLP', '', '', '0', '1'],
  ['0005844', 'S', '', 'ACC 200 mg cps 20', '9,00', 'HVLP', 'TABLETY', 'Inventura', '0', '0'],
  ['0226194', 'S', '', 'ACC 20MG/ML SIR 200 ml', '56,00', 'HVLP', '', 'Inventura', '0', '0'],
  ['0057395', 'S', 'H', 'ACC LONG 600 mg tbl eff 10', '120,00', 'HVLP', 'TABLETY', 'Inventura', '5', '10'],
  ['0057396', 'S', 'H', 'ACC LONG 600 mg tbl eff 20', '183,00', 'HVLP', 'TABLETY', 'Inventura', '5', '10'],
  ['0172830', 'S', '', 'ACC LONG INSTANT 600mg 10 sáčků', '0,00', 'Ostatní', '', 'Inventura', '', ''],
  ['0162245', '', '', 'ACC NEO 100 mg tbl eff 20', '11,00', 'HVLP', '', '', '0', '0'],
  ['0162250', '', '', 'ACC NEO 200 mg tbl eff 20', '55,00', 'HVLP', '', '', '3', '5'],
  ['5008191', '', '', 'ACCU CHEK FASTCLIX lancets 24ks', '0,00', 'PZT', '', '', '', ''],
  ['5014464', '', '', 'Accugence Multi-monitorovací systém model PM900', '0,00', 'PZT', '', '', '', ''],
  ['5008185', '', '', 'ACCU-CHEK FASTCLIX ODBĚROVÉ PERO', '0,00', 'PZT', '', '', '', ''],
  ['5008193', '', '', 'ACCU-CHEK Performa kit', '0,00', 'PZT', '', '', '', ''],
  ['0094959', '', '', 'ACCUPRO 10 mg tbl flm 30', '0,00', 'Ostatní', 'TABLETY', 'Inventura', '1', '3'],
  ['0094960', '', '', 'ACCUPRO 20 mg tbl flm 30', '0,00', 'Ostatní', '', 'Inventura', '', ''],
  ['0094958', '', '', 'ACCUPRO 5 mg tbl flm 30', '0,00', 'Ostatní', 'TABLETY', 'Inventura', '0', '0'],
  ['0076710', '', '', 'ACCUZIDE 10 tbl flm 100', '0,00', 'Ostatní', '', 'Inventura', '0', '1'],
  ['0064790', '', '', 'ACCUZIDE 20 tbl flm 100', '0,00', 'Ostatní', '', 'Inventura', '', ''],
  ['0064788', '', '', 'ACCUZIDE 20 tbl flm 30', '0,00', 'Ostatní', 'TABLETY', 'Inventura', '2', '3']
];

const lotColumns = [
  ['', 20, 'mark'], ['PC s DPH', 76, 'num'], ['Množství', 90, 'num'], ['NC s DPH', 76, 'num'], ['Distributor', 101, ''],
  ['Exspirace', 81, 'num'], ['Přijato', 89, 'num'], ['Datum', 81, 'num'], ['Vlastní', 68, ''], ['Číslo dokladu', 101, ''],
  ['Poslední', 81, ''], ['Hlá', 20, ''], ['Šarže', 134, ''], ['Certifikát', 134, ''], ['Sklad', 41, ''], ['#', 76, 'sort'], ['Zdroj', 0, '']
];

const lots = [
  ['145,00', '26,0000', '101,78', 'Pharmos a.s.', '31.07.2024', '48,0000', '24.08.2023', '80903/08', '9743650325', '05.12.2023', '', 'MB8138', '', '0', '838376', 'Dodací list'],
  ['145,00', '10,0000', '101,78', 'Pharmos a.s.', '31.07.2024', '12,0000', '24.08.2023', '80903/08', '9743650325', '30.07.2024', '', 'MB8138', '', '0', '838377', 'Dodací list']
];

const pencil = '<svg viewBox="0 0 14 18"><path d="M5 13l5-11 3 2-5 10-3 2z" fill="#fff" stroke="#000" stroke-width="1.500"/><path d="M0 16h4" stroke="#000" stroke-dasharray="1 1"/></svg>';
const arrow = '<svg viewBox="0 0 8 14"><path d="M0 0l8 7-8 7z"/></svg>';
const sortMark = ' <svg><use href="#i-sort"/></svg>';

function td(text, cls) {
  return `<td class="${cls || ''}">${text}</td>`;
}

function check(label, state) {
  return td(`<input type="checkbox" class="check" aria-label="${label}" ${state}>`, 'box');
}

function gridHead(columns) {
  const cols = columns.map(c => c[1] ? `<col style="width: ${c[1]}px">` : '<col>').join('');
  const heads = columns.map(c => `<th class="${c[2]}">${c[0].replace('>', '&gt;')}${c[2] === 'sort' ? sortMark : ''}</th>`).join('');
  return `<colgroup>${cols}</colgroup><thead><tr>${heads}</tr>`;
}

function cardRow(c, i) {
  const [sukl, stock, hlp, name, qty, type, group, pref, crit, full] = c;
  const off = 'disabled';
  return `<tr class="data ${i === 0 ? 'selected' : ''}">` +
    td(i === 0 ? pencil : '', 'mark') + check('Vybrat ' + sukl, '') + td(sukl) + td('') +
    td(stock, stock ? 'in-stock' : '') + td(hlp, hlp ? 'hlp' : '') + td(name) +
    td(qty, 'num') + td('0,00', 'num') + check('Volně prodejné', 'checked disabled') + td(type) +
    check('Recept', type === 'PZT' ? 'checked disabled' : off) + check('SiV', off) + check('LP', off) + td('') +
    td('12%', 'num') + td('12%', 'num') + td('GP', 'num') + td('') +
    check('PL', off) + check('PL', off) + check('PL', off) +
    td(group) + td('') + td('') + td(pref) + td(crit, 'num') + td(full, 'num') + td('') +
    check('Op', off) + check('Sle', off) + td('Klientská sleva') + '</tr>';
}

function lotRow(values, i) {
  const cells = values.map((v, n) => td(v, lotColumns[n + 1][2])).join('');
  return `<tr class="data ${i === 1 ? 'selected' : ''}">${td(i === 1 ? arrow : '', 'mark')}${cells}</tr>`;
}

const cardFilter = cardColumns.map(c => {
  if (c[2] === 'box') return td('<input type="checkbox" class="check mixed" aria-label="Filtr">', 'box');
  return td(c[0] === 'Název' ? 'acc' : '', c[2]);
}).join('');

document.getElementById('cards').innerHTML = gridHead(cardColumns) +
  `<tr class="filter">${cardFilter}</tr><tr class="gap"><td colspan="32"></td></tr></thead>` +
  `<tbody>${cards.map(cardRow).join('')}</tbody>`;

document.getElementById('lots').innerHTML = gridHead(lotColumns) +
  `<tr class="filter">${lotColumns.map(c => td('', c[2])).join('')}</tr><tr class="gap"><td colspan="17"></td></tr></thead>` +
  `<tbody>${lots.map(lotRow).join('')}</tbody>`;
```
